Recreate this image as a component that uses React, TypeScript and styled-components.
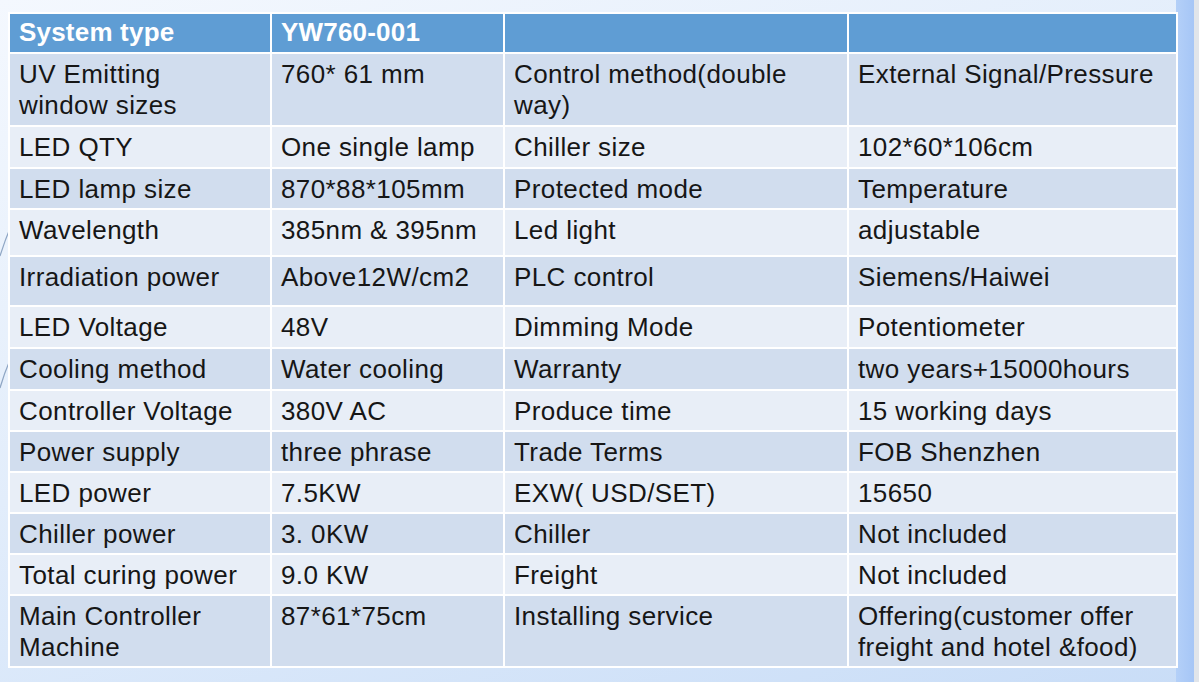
import React from 'react';
import styled, { createGlobalStyle } from 'styled-components';

const GlobalStyle = createGlobalStyle`
  html, body {
    margin: 0;
    padding: 0;
  }
  body {
    width: 1199px;
    height: 682px;
    overflow: hidden;
    font-family: "Liberation Sans", Arial, sans-serif;
    background:
      linear-gradient(to right, transparent 1176px, #b4d0f8 1176px, #a6c6f6 1194px, #e1e5ea 1194px),
      linear-gradient(160deg, #f4f8fe 0%, #e2edfb 45%, #c9ddf7 100%);
  }
`;

const Page = styled.div`
  position: relative;
  padding: 12px 0 0 8px;
`;

const Swoosh = styled.svg`
  position: absolute;
  left: 0;
  top: 0;
  pointer-events: none;
`;

const Table = styled.table`
  position: relative;
  border-collapse: collapse;
  table-layout: fixed;
  width: 1168px;
`;

const Row = styled.tr<{ $tone: 'head' | 'dark' | 'light'; $h: number }>`
  height: ${(p) => p.$h}px;
  background: ${(p) =>
    p.$tone === 'head' ? '#5f9dd4' : p.$tone === 'dark' ? '#d1ddee' : '#e8eef7'};
  color: ${(p) => (p.$tone === 'head' ? '#ffffff' : '#161616')};
  font-weight: ${(p) => (p.$tone === 'head' ? 700 : 400)};
`;

const Cell = styled.td`
  border: 2px solid #ffffff;
  padding: 5px 8px 0 9px;
  vertical-align: top;
  font-size: 26px;
  line-height: 31px;
  letter-spacing: 0.4px;
  overflow: hidden;
  white-space: nowrap;
`;

const Head = styled(Cell).attrs({ as: 'th' })`
  text-align: left;
  padding: 3px 8px 0 9px;
  letter-spacing: 0.2px;
`;

const Line = styled.span`
  display: block;
`;

type Spec = [string[], string[], string[], string[], number];

const rows: Spec[] = [
  [['UV Emitting', 'window sizes'], ['760* 61 mm'], ['Control method(double', 'way)'], ['External Signal/Pressure'], 73],
  [['LED QTY'], ['One single lamp'], ['Chiller size'], ['102*60*106cm'], 42],
  [['LED lamp size'], ['870*88*105mm'], ['Protected mode'], ['Temperature'], 41],
  [['Wavelength'], ['385nm & 395nm'], ['Led light'], ['adjustable'], 47],
  [['Irradiation power'], ['Above12W/cm2'], ['PLC control'], ['Siemens/Haiwei'], 50],
  [['LED Voltage'], ['48V'], ['Dimming Mode'], ['Potentiometer'], 42],
  [['Cooling method'], ['Water cooling'], ['Warranty'], ['two years+15000hours'], 42],
  [['Controller Voltage'], ['380V AC'], ['Produce time'], ['15 working days'], 41],
  [['Power supply'], ['three phrase'], ['Trade Terms'], ['FOB Shenzhen'], 41],
  [['LED power'], ['7.5KW'], ['EXW( USD/SET)'], ['15650'], 41],
  [['Chiller power'], ['3. 0KW'], ['Chiller'], ['Not included'], 41],
  [['Total curing power'], ['9.0 KW'], ['Freight'], ['Not included'], 41],
  [['Main Controller', 'Machine'], ['87*61*75cm'], ['Installing service'], ['Offering(customer offer', 'freight and hotel &food)'], 72],
];

function Lines({ text }: { text: string[] }) {
  return (
    <>
      {text.map((t) => (
        <Line key={t}>{t}</Line>
      ))}
    </>
  );
}

export default function App() {
  return (
    <>
      <GlobalStyle />
      <Page>
        <Swoosh width="20" height="682" viewBox="0 0 20 682">
          <path d="M0 256 Q5 240 11 226" stroke="#8fa6c4" strokeWidth="1.2" fill="none" />
          <path d="M0 388 Q4 374 10 360" stroke="#8fa6c4" strokeWidth="1.2" fill="none" />
        </Swoosh>
        <Table>
          <colgroup>
            <col style={{ width: 262 }} />
            <col style={{ width: 233 }} />
            <col style={{ width: 344 }} />
            <col style={{ width: 329 }} />
          </colgroup>
          <thead>
            <Row $tone="head" $h={40}>
              <Head>System type</Head>
              <Head>YW760-001</Head>
              <Head />
              <Head />
            </Row>
          </thead>
          <tbody>
            {rows.map(([a, b, c, d, h], i) => (
              <Row key={a[0]} $tone={i % 2 === 0 ? 'dark' : 'light'} $h={h}>
                <Cell><Lines text={a} /></Cell>
                <Cell><Lines text={b} /></Cell>
                <Cell><Lines text={c} /></Cell>
                <Cell><Lines text={d} /></Cell>
              </Row>
            ))}
          </tbody>
        </Table>
      </Page>
    </>
  );
}
